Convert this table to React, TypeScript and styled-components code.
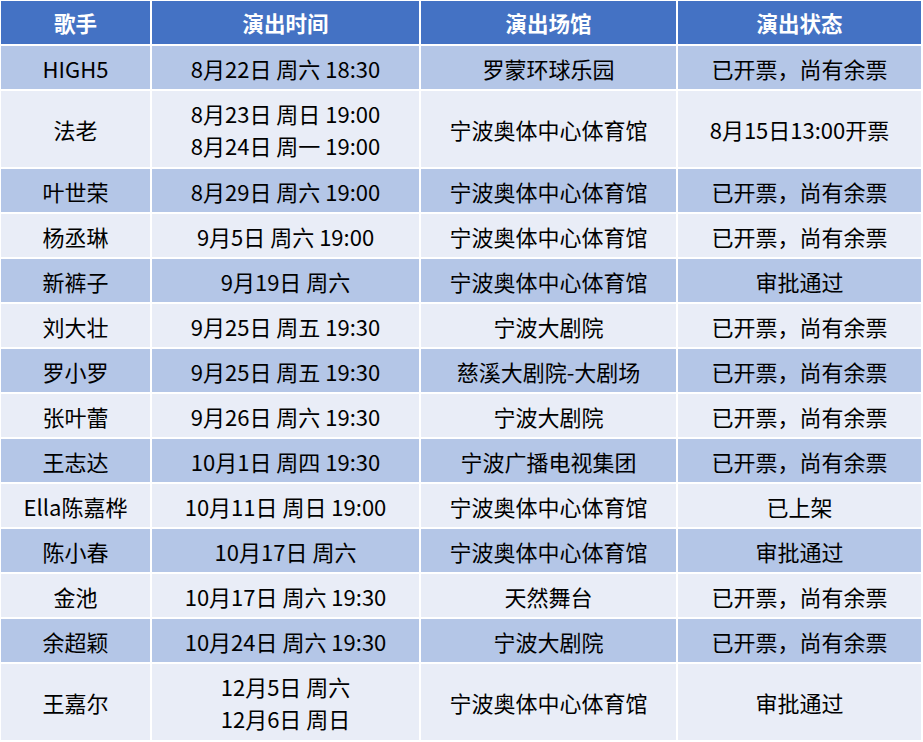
import styled, { createGlobalStyle } from "styled-components";

const GlobalStyle = createGlobalStyle`
  body {
    margin: 0;
    background: #fff;
    font-family: "Noto Sans CJK SC", "Noto Sans", sans-serif;
  }
`;

type Show = {
  singer: string;
  times: string[];
  venue: string;
  status: string;
};

const shows: Show[] = [
  { singer: "HIGH5", times: ["8月22日 周六 18:30"], venue: "罗蒙环球乐园", status: "已开票，尚有余票" },
  { singer: "法老", times: ["8月23日 周日 19:00", "8月24日 周一 19:00"], venue: "宁波奥体中心体育馆", status: "8月15日13:00开票" },
  { singer: "叶世荣", times: ["8月29日 周六 19:00"], venue: "宁波奥体中心体育馆", status: "已开票，尚有余票" },
  { singer: "杨丞琳", times: ["9月5日 周六 19:00"], venue: "宁波奥体中心体育馆", status: "已开票，尚有余票" },
  { singer: "新裤子", times: ["9月19日 周六"], venue: "宁波奥体中心体育馆", status: "审批通过" },
  { singer: "刘大壮", times: ["9月25日 周五 19:30"], venue: "宁波大剧院", status: "已开票，尚有余票" },
  { singer: "罗小罗", times: ["9月25日 周五 19:30"], venue: "慈溪大剧院-大剧场", status: "已开票，尚有余票" },
  { singer: "张叶蕾", times: ["9月26日 周六 19:30"], venue: "宁波大剧院", status: "已开票，尚有余票" },
  { singer: "王志达", times: ["10月1日 周四 19:30"], venue: "宁波广播电视集团", status: "已开票，尚有余票" },
  { singer: "Ella陈嘉桦", times: ["10月11日 周日 19:00"], venue: "宁波奥体中心体育馆", status: "已上架" },
  { singer: "陈小春", times: ["10月17日 周六"], venue: "宁波奥体中心体育馆", status: "审批通过" },
  { singer: "金池", times: ["10月17日 周六 19:30"], venue: "天然舞台", status: "已开票，尚有余票" },
  { singer: "余超颖", times: ["10月24日 周六 19:30"], venue: "宁波大剧院", status: "已开票，尚有余票" },
  { singer: "王嘉尔", times: ["12月5日 周六", "12月6日 周日"], venue: "宁波奥体中心体育馆", status: "审批通过" },
];

const headers = ["歌手", "演出时间", "演出场馆", "演出状态"];

const App = () => {
  return (
    <>
      <GlobalStyle />
      <Table>
        {headers.map((h) => (
          <HeadCell key={h}>{h}</HeadCell>
        ))}
        {shows.map((s, i) => {
          const dark = i % 2 === 0;
          const tall = s.times.length > 1;
          return [
            <Cell key={`${i}-a`} $dark={dark} $tall={tall}>{s.singer}</Cell>,
            <Cell key={`${i}-b`} $dark={dark} $tall={tall}>
              {s.times.map((t) => (
                <Line key={t}>{t}</Line>
              ))}
            </Cell>,
            <Cell key={`${i}-c`} $dark={dark} $tall={tall}>{s.venue}</Cell>,
            <Cell key={`${i}-d`} $dark={dark} $tall={tall}>{s.status}</Cell>,
          ];
        })}
      </Table>
    </>
  );
};

export default App;

const Table = styled.div`
  display: grid;
  grid-template-columns: 149px 267px 255px 243px;
  gap: 2px;
  padding: 1px;
  width: max-content;
  background: #fff;
`;

const HeadCell = styled.div`
  height: 43px;
  background: #4472c4;
  color: #fff;
  font-size: 21.5px;
  font-weight: 700;
  display: flex;
  align-items: center;
  justify-content: center;
`;

const Cell = styled.div<{ $dark: boolean; $tall: boolean }>`
  height: ${(p) => (p.$tall ? "76px" : "43px")};
  background: ${(p) => (p.$dark ? "#b4c6e7" : "#e9edf7")};
  color: #000;
  font-size: 22px;
  display: flex;
  flex-direction: column;
  align-items: center;
  justify-content: center;
  white-space: nowrap;
`;

const Line = styled.span`
  line-height: 32px;
`;
